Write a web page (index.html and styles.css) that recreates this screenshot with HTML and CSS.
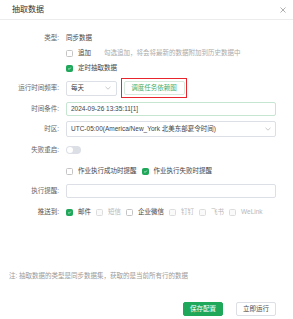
FILE: index.html
```html
<!DOCTYPE html>
<html lang="zh">
<head>
<meta charset="utf-8">
<link rel="stylesheet" href="styles.css">
</head>
<body>
<div class="dialog">
  <div class="header">
    <span class="title">抽取数据</span>
    <svg class="close" width="6" height="6" viewBox="0 0 6 6"><path d="M0.5 0.5L5.5 5.5M5.5 0.5L0.5 5.5" stroke="#9a9a9a" stroke-width="0.8"/></svg>
  </div>
  <div class="body">
    <div class="row r-type">
      <span class="label">类型:</span>
      <span class="value">同步数据</span>
    </div>
    <div class="row r-plain indent">
      <span class="cb"></span><span class="value">追加</span>
      <span class="hint">勾选追加，将会将最新的数据附加到历史数据中</span>
    </div>
    <div class="row r-plain indent">
      <span class="cb on"><svg viewBox="0 0 8 8" width="8" height="8"><path d="M2 4.2L3.4 5.5L6 2.6" stroke="#fff" stroke-width="1.1" fill="none"/></svg></span><span class="value">定时抽取数据</span>
    </div>
    <div class="row r-freq">
      <span class="label">运行时间频率:</span>
      <span class="select small"><span class="value">每天</span><svg class="arrow" width="6" height="4" viewBox="0 0 6 4"><path d="M0.5 0.8L3 3.2L5.5 0.8" stroke="#b5b5b5" stroke-width="0.7" fill="none"/></svg></span>
      <span class="highlight"><span class="btn-link">调度任务依赖图</span></span>
    </div>
    <div class="row r-time">
      <span class="label">时间条件:</span>
      <span class="input green"><span class="value">2024-09-26 13:35:11[1]</span></span>
    </div>
    <div class="row r-tz">
      <span class="label">时区:</span>
      <span class="input"><span class="value">UTC-05:00(America/New_York 北美东部夏令时间)</span><svg class="arrow" width="6" height="4" viewBox="0 0 6 4"><path d="M0.5 0.8L3 3.2L5.5 0.8" stroke="#b5b5b5" stroke-width="0.7" fill="none"/></svg></span>
    </div>
    <div class="row r-restart">
      <span class="label">失败重启:</span>
      <span class="toggle"><span class="knob"></span></span>
    </div>
    <div class="row r-notify indent">
      <span class="cb"></span><span class="value">作业执行成功时提醒</span>
      <span class="cb on gap"><svg viewBox="0 0 8 8" width="8" height="8"><path d="M2 4.2L3.4 5.5L6 2.6" stroke="#fff" stroke-width="1.1" fill="none"/></svg></span><span class="value">作业执行失败时提醒</span>
    </div>
    <div class="row r-remind">
      <span class="label">执行提醒:</span>
      <span class="input"></span>
    </div>
    <div class="row r-push">
      <span class="label dark">推送到:</span>
      <span class="cb on"><svg viewBox="0 0 8 8" width="8" height="8"><path d="M2 4.2L3.4 5.5L6 2.6" stroke="#fff" stroke-width="1.1" fill="none"/></svg></span><span class="value">邮件</span>
      <span class="cb dis gap"></span><span class="value muted">短信</span>
      <span class="cb gap"></span><span class="value">企业微信</span>
      <span class="cb dis gap"></span><span class="value muted">钉钉</span>
      <span class="cb dis gap"></span><span class="value muted">飞书</span>
      <span class="cb dis gap"></span><span class="value muted">WeLink</span>
    </div>
    <div class="note">注: 抽取数据的类型是同步数据集，获取的是当前所有行的数据</div>
    <div class="footer">
      <span class="btn primary">保存配置</span>
      <span class="btn">立即运行</span>
    </div>
  </div>
</div>
</body>
</html>
```
FILE: styles.css
```css
* { box-sizing: border-box; }
html, body { margin: 0; padding: 0; background: #fff; }
body {
  font-family: "Liberation Sans", "Noto Sans CJK SC", sans-serif;
  font-size: 6.5px;
  color: #444;
}
.dialog { width: 293px; height: 319px; background: #fff; overflow: hidden; }
.header {
  height: 20px;
  border-bottom: 1px solid #ececec;
  display: flex;
  align-items: center;
  justify-content: space-between;
  padding: 0 7px 0 12px;
}
.title { font-size: 8px; color: #333; line-height: 1; }
.close { display: block; }
.body { padding-top: 11px; }
.row { display: flex; align-items: center; height: 15px; line-height: 1; }
.label { width: 59px; text-align: right; color: #666; margin-right: 7px; flex: none; }
.label.dark { color: #555; }
.indent { padding-left: 66px; }
.value { color: #444; white-space: nowrap; }
.muted { color: #b8b8b8; }
.hint { color: #aaa; margin-left: 13px; white-space: nowrap; }
.cb {
  width: 7px; height: 7px;
  border: 0.8px solid #c4c4c4;
  border-radius: 1.5px;
  margin-right: 5px;
  flex: none;
  display: flex; align-items: center; justify-content: center;
  background: #fff;
}
.cb svg { display: block; width: 7px; height: 7px; }
.cb.on { background: #1fa85a; border-color: #1fa85a; }
.cb.dis { border-color: #dcdcdc; background: #fafafa; }
.cb.gap { margin-left: 5px; }
.r-freq { height: 20px; margin-top: 2px; }
.select, .input {
  display: flex; align-items: center; justify-content: space-between;
  border: 0.8px solid #dcdfe6;
  border-radius: 2px;
  padding: 0 5px;
  background: #fff;
}
.select.small { width: 51px; height: 15px; padding-left: 4px; }
.highlight {
  margin-left: 4px;
  border: 1px solid #e8242c;
  width: 66px; height: 20px;
  display: flex; align-items: center; justify-content: center;
}
.btn-link {
  width: 61px; height: 14px;
  border: 0.8px solid #d6e9dc;
  border-radius: 2px;
  color: #3fae6a;
  display: flex; align-items: center; justify-content: center;
}
.r-time { height: 14px; margin-top: 4px; }
.input { width: 210px; height: 14px; padding-left: 4px; }
.input.green { border-color: #c7e6d2; }
.r-tz { height: 16px; margin-top: 5px; }
.r-tz .input { height: 16px; padding-right: 4px; }
.r-restart { height: 14px; margin-top: 6px; }
.toggle {
  width: 15px; height: 8px; border-radius: 4px;
  background: #dcdfe6;
  display: flex; align-items: center; padding-left: 1px;
}
.knob { width: 6px; height: 6px; border-radius: 50%; background: #fff; }
.r-notify { height: 14px; margin-top: 7px; }
.r-remind { height: 14px; margin-top: 6px; }
.r-push { height: 14px; margin-top: 7px; }
.note { color: #9a9a9a; margin: 52px 0 0 9px; height: 10px; line-height: 10px; white-space: nowrap; }
.footer { display: flex; justify-content: flex-end; gap: 13px; padding-right: 17px; margin-top: 21px; }
.btn {
  height: 14px; padding: 0 6px;
  border: 0.8px solid #dcdfe6; border-radius: 2px;
  display: flex; align-items: center; justify-content: center;
  color: #444; line-height: 1;
}
.btn.primary { background: #1fa85a; border-color: #1fa85a; color: #fff; }
```
